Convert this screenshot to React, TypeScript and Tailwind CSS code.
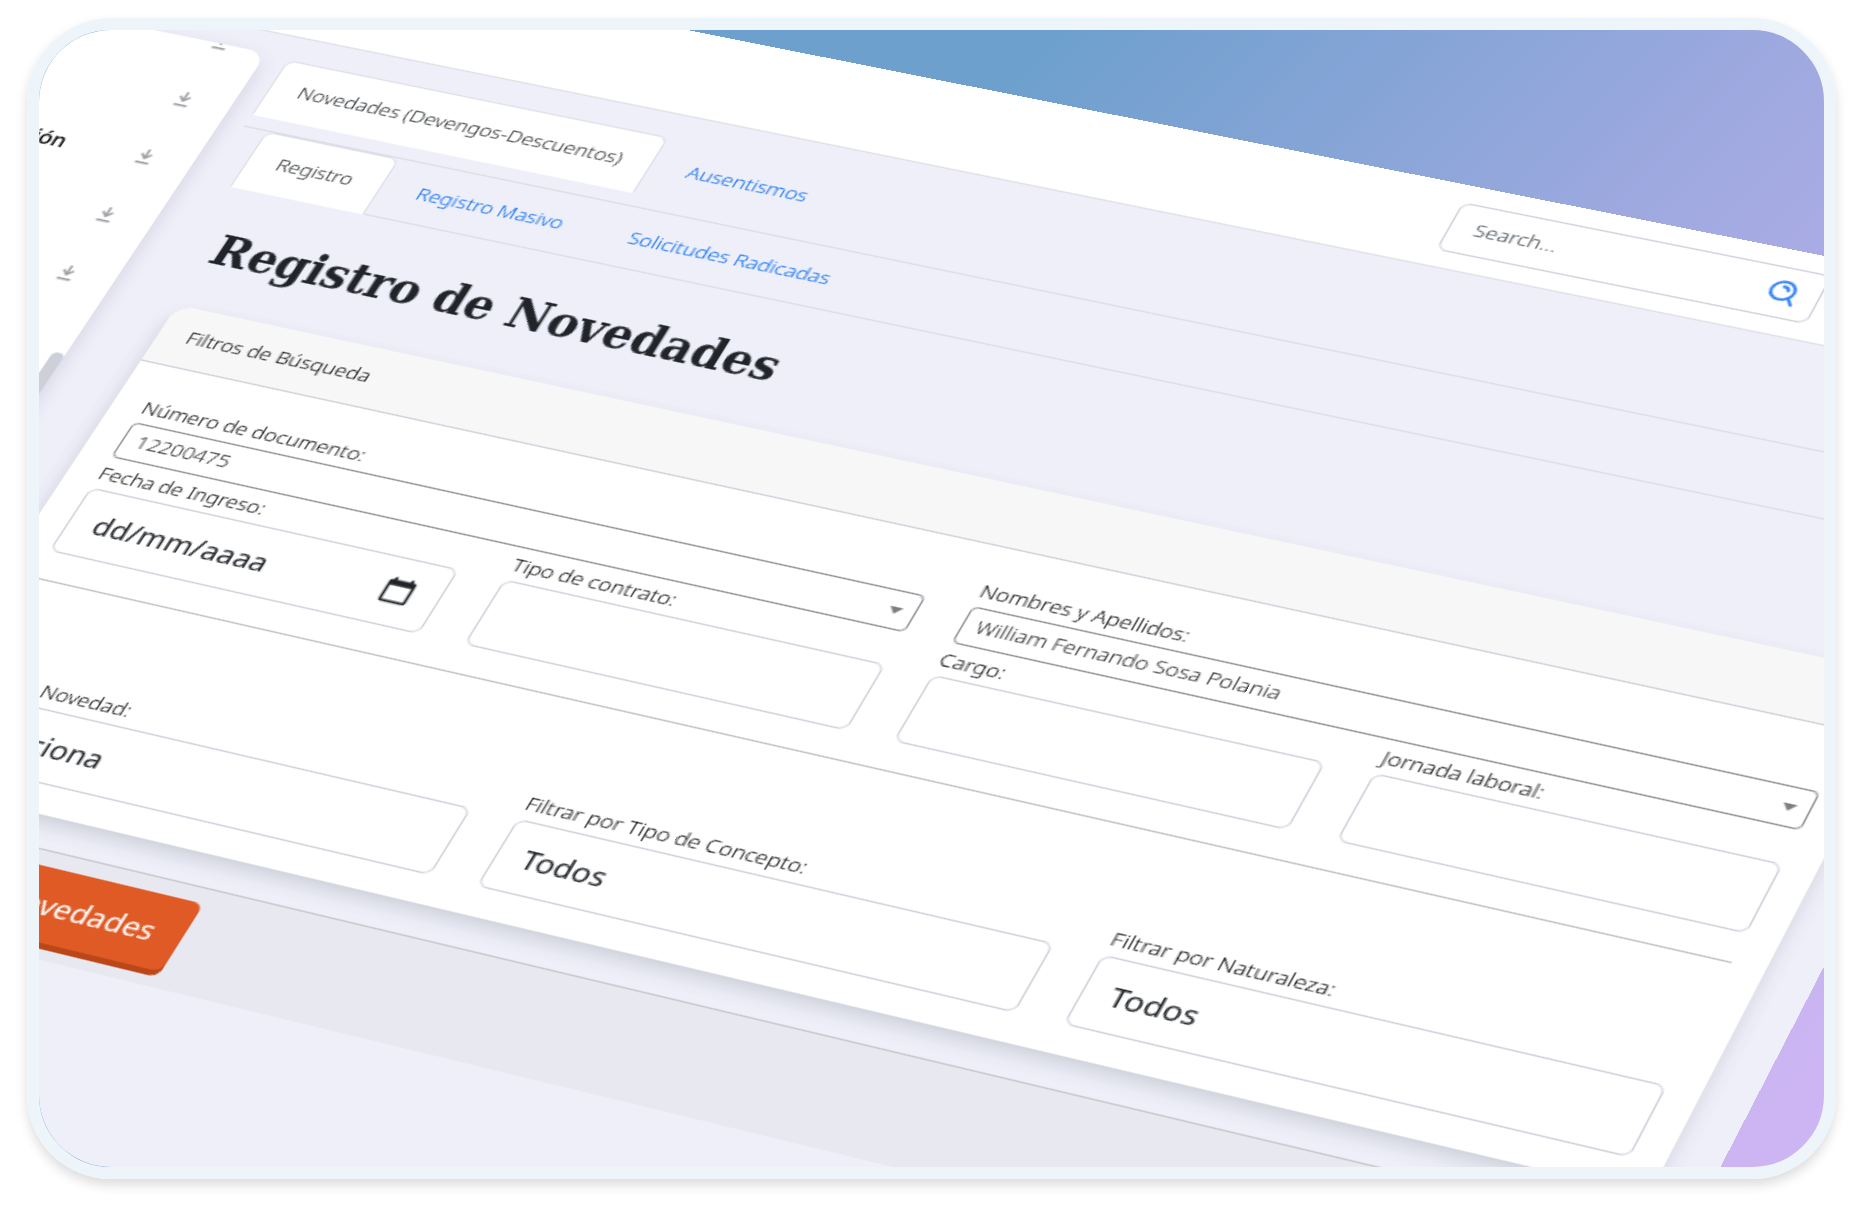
import type { ReactNode } from "react";
import { clsx } from "clsx";

const SelectBox = ({ id, label, value }: { id: string; label: string; value: string }) => {
  return (
    <div className="min-w-0">
      <label htmlFor={id} className="block text-[13px] leading-6">
        {label}
      </label>
      <div className="relative">
        <select
          id={id}
          className="block h-7 w-full appearance-none rounded-sm border border-[#8f8f96] bg-white pl-2 text-[13px] text-[#222]"
        >
          <option>{value}</option>
        </select>
        <svg viewBox="0 0 8 5" className="pointer-events-none absolute right-2 top-3 h-[5px] w-2 fill-[#7d7d83]">
          <path d="M0 0h8L4 5z" />
        </svg>
      </div>
    </div>
  );
};

const Field = ({ id, label, children }: { id: string; label: string; children: ReactNode }) => {
  return (
    <div className="min-w-0">
      <label htmlFor={id} className="block text-[13px] leading-6">
        {label}
      </label>
      {children}
    </div>
  );
};

const control =
  "block h-[50px] w-full appearance-none rounded-md border border-[#ced0da] bg-white px-[15px] text-[18px] font-normal text-[#212529] placeholder:text-[#212529] placeholder:opacity-100";

const CalendarIcon = () => (
  <svg viewBox="0 0 24 24" className="h-5 w-5 fill-[#212529]">
    <path d="M20 3h-1V1h-2v2H7V1H5v2H4c-1.100 0-2 .9-2 2v16c0 1.100.9 2 2 2h16c1.100 0 2-.9 2-2V5c0-1.100-.9-2-2-2zm0 18H4V8h16v13z" />
  </svg>
);

const SearchIcon = () => (
  <svg viewBox="0 0 20 20" className="h-[18px] w-[18px] fill-none stroke-[#2f80f6] stroke-2 [stroke-linecap:round]">
    <circle cx="9" cy="8.500" r="7.500" />
    <path d="M8.500 5c2.200 0 3.500 1.200 3.700 3M14.500 14l3.500 5" />
  </svg>
);

const DownIcon = () => (
  <svg viewBox="0 0 14 14" className="h-3 w-3 fill-none stroke-[#9d9da2] stroke-[1.700]">
    <path d="M7 0v8M3.200 4.500L7 8.500l3.800-4M2 12.500h10" />
  </svg>
);

const sections = ["Inicio", "Equipo", "Configuración", "Nómina", "Cargos"];

const Sidebar = () => {
  return (
    <aside className="mt-4 flex h-[440px] w-60 shrink-0 overflow-hidden rounded-tr-xl bg-white shadow-[0_6px_14px_rgba(60,65,90,0.18)]">
      <nav className="-mt-[25px] flex-1">
        {sections.map((section) => (
          <a
            key={section}
            href="#"
            className="flex h-12 items-center justify-between pl-16 pr-4 text-[14px] font-medium text-black"
          >
            {section}
            <DownIcon />
          </a>
        ))}
      </nav>
      <div className="mt-[249px] h-40 w-2 rounded-full bg-[#cdd0d8]" />
    </aside>
  );
};

const Tab = ({ active, className, children }: { active?: boolean; className: string; children: ReactNode }) => {
  return (
    <a
      href="#"
      className={clsx(
        "flex items-center rounded-t-md border px-[18px] text-[13px]",
        active ? "border-[#dee0e8] border-b-white bg-white text-[#212529]" : "border-transparent text-[#0068f0]",
        className
      )}
    >
      {children}
    </a>
  );
};

const Filters = () => {
  return (
    <section className="rounded-xl bg-white shadow-[0_6px_12px_rgba(60,75,80,0.18)]">
      <div className="flex h-[45px] items-center rounded-t-xl border-b border-[#cfcfd9] bg-[#f7f7f7] px-[18px] text-[13px]">
        Filtros de Búsqueda
      </div>
      <form className="px-[19px] py-5">
        <div className="grid grid-cols-2 gap-x-7">
          <SelectBox id="documento" label="Número de documento:" value="12200475" />
          <SelectBox id="nombres" label="Nombres y Apellidos:" value="William Fernando Sosa Polania" />
        </div>
        <div className="grid grid-cols-4 gap-x-7">
          <Field id="ingreso" label="Fecha de Ingreso:">
            <div className="relative">
              <input id="ingreso" placeholder="dd/mm/aaaa" className={control} />
              <button type="button" aria-label="Calendario" className="absolute right-4 top-3.5">
                <CalendarIcon />
              </button>
            </div>
          </Field>
          <Field id="contrato" label="Tipo de contrato:">
            <input id="contrato" className={control} />
          </Field>
          <Field id="cargo" label="Cargo:">
            <input id="cargo" className={control} />
          </Field>
          <Field id="jornada" label="Jornada laboral:">
            <input id="jornada" className={control} />
          </Field>
        </div>
        <hr className="mb-[62px] mt-5 border-[#bfbfc6]" />
        <div className="grid grid-cols-3 gap-x-7">
          <Field id="novedad" label="Tipo de Novedad:">
            <select id="novedad" className={control}>
              <option>Selecciona</option>
            </select>
          </Field>
          <Field id="concepto" label="Filtrar por Tipo de Concepto:">
            <select id="concepto" className={control}>
              <option>Todos</option>
            </select>
          </Field>
          <Field id="naturaleza" label="Filtrar por Naturaleza:">
            <select id="naturaleza" className={control}>
              <option>Todos</option>
            </select>
          </Field>
        </div>
      </form>
    </section>
  );
};

const App = () => {
  return (
    <div className="h-screen bg-white px-[27px] pb-9 pt-[18px] font-['Noto_Sans','Open_Sans',sans-serif] font-light text-black">
      <div className="h-full overflow-hidden rounded-[84px] border-12 border-[#eef5fa] bg-[linear-gradient(135deg,#6ea0cd_35%,#a4aae2_64%,#cdb5f3_97%)] shadow-[0_6px_12px_rgba(0,0,0,0.14)]">
        {/* the whole screen is laid flat and tilted in perspective */}
        <div className="h-[940px] w-[1366px] origin-top-left bg-[#efeffa] [transform:matrix3d(1.469656,0.299835,0,-0.0000611160,-0.792602,1.155718,0,-0.0000863120,0,0,1,0,-66.508,-141.965,0,1)]">
          <header className="flex h-16 items-center justify-end border-b border-[#dfdfe6] bg-white pr-[183px]">
            <div className="flex h-[38px] w-[220px] items-center rounded-md border border-[#ced0da] bg-white pl-3.5 pr-[11px]">
              <input
                aria-label="Search"
                placeholder="Search..."
                className="min-w-0 flex-1 text-[13px] placeholder:text-[#3c454d] placeholder:opacity-100"
              />
              <button type="button" aria-label="Buscar">
                <SearchIcon />
              </button>
            </div>
          </header>
          <div className="flex">
            <Sidebar />
            <main className="flex-1 pl-[15px] pt-[18px]">
              <nav className="flex gap-1 border-b border-[#dcdce6] pb-[9px]">
                <Tab active className="h-[46px]">
                  Novedades (Devengos-Descuentos)
                </Tab>
                <Tab className="h-[46px]">Ausentismos</Tab>
              </nav>
              <div className="pl-[15px]">
                <nav className="flex gap-1 border-b border-[#dcdce6]">
                  <Tab active className="-mb-px h-[46px]">
                    Registro
                  </Tab>
                  <Tab className="h-[45px]">Registro Masivo</Tab>
                  <Tab className="h-[45px]">Solicitudes Radicadas</Tab>
                </nav>
                <div className="pl-[15px] pr-7">
                  <h1 className="mb-6 mt-[25px] font-['DejaVu_Serif_Condensed','DejaVu_Serif',serif] text-[31px] font-bold leading-11 text-[#212529]">
                    Registro de Novedades
                  </h1>
                  <Filters />
                  <footer className="mt-[22px] h-[72px] border-t border-[#c6c6cb] bg-[#e8e8f1] px-[18px] pt-2.5">
                    <button
                      type="button"
                      className="h-[50px] w-[210px] rounded-md bg-[#e05a26] text-[18px] font-normal text-white shadow-[0_4px_0_#bb4617]"
                    >
                      Registrar Novedades
                    </button>
                  </footer>
                </div>
              </div>
            </main>
          </div>
        </div>
      </div>
    </div>
  );
};

export default App;
